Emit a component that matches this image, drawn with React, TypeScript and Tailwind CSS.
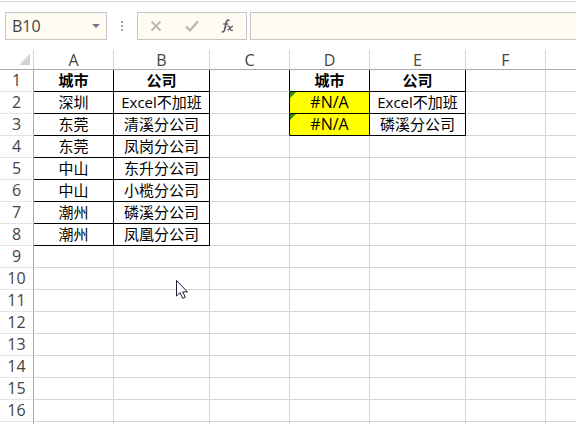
import clsx from "clsx";

const columns = ["A", "B", "C", "D", "E", "F", ""];
const rowNumbers = Array.from({ length: 16 }, (_, i) => i + 1);

const cells: Record<string, string> = {
  A1: "城市",
  B1: "公司",
  A2: "深圳",
  B2: "Excel不加班",
  A3: "东莞",
  B3: "清溪分公司",
  A4: "东莞",
  B4: "凤岗分公司",
  A5: "中山",
  B5: "东升分公司",
  A6: "中山",
  B6: "小榄分公司",
  A7: "潮州",
  B7: "磷溪分公司",
  A8: "潮州",
  B8: "凤凰分公司",
  D1: "城市",
  E1: "公司",
  D2: "#N/A",
  E2: "Excel不加班",
  D3: "#N/A",
  E3: "磷溪分公司",
};

function Cell({ col, row }: { col: string; row: number }) {
  const value = cells[col + row];
  const isError = value === "#N/A";
  // the cell left of the second table draws that table's left edge
  const blackRight = Boolean(value) || (col === "C" && row <= 3);

  return (
    <td
      className={clsx(
        "relative h-[22px] border-r border-b p-0 pb-[2px] text-center text-black last:border-r-0",
        blackRight ? "border-r-black" : "border-r-[#d4d4d4]",
        value ? "border-b-black" : "border-b-[#d4d4d4]",
        row === 1 && "font-bold",
        isError && "bg-[#ffff00] text-[16px]"
      )}
    >
      {isError && (
        <svg className="absolute top-0 left-0 size-[6px]" viewBox="0 0 6 6" aria-hidden="true">
          <path d="M0 0h6L0 6z" fill="#2c8a12" />
        </svg>
      )}
      {value}
    </td>
  );
}

function FormulaBar() {
  return (
    <div className="flex h-[28px] pl-[5px] text-[#444444]">
      <div className="flex w-[102px] shrink-0 border border-[#c6c6c6] bg-[#fffbf3]">
        <input
          aria-label="Name box"
          defaultValue="B10"
          className="w-full min-w-0 bg-transparent pl-[6px] text-[16px] outline-none"
        />
        <button aria-label="Show names" className="flex w-[20px] shrink-0 items-center justify-center">
          <svg width="8" height="4" viewBox="0 0 8 4">
            <path d="M0 0h8L4 4z" fill="#77708a" />
          </svg>
        </button>
      </div>
      <svg className="shrink-0" width="30" height="28" viewBox="0 0 30 28" aria-hidden="true">
        <path d="M14 9h2v2h-2zM14 13h2v2h-2zM14 17h2v2h-2z" fill="#a3a3a3" />
      </svg>
      <div className="mr-[3px] flex w-[110px] shrink-0 items-center justify-between border border-[#c6c6c6] bg-[#fffbf3] px-[8px]">
        <button aria-label="Cancel" className="p-[4px]">
          <svg width="12" height="12" viewBox="0 0 12 12" fill="none" stroke="#b9b6b6" strokeWidth="1.8">
            <path d="M1.500 1.500l9 9M10.500 1.500l-9 9" />
          </svg>
        </button>
        <button aria-label="Enter" className="p-[4px]">
          <svg width="14" height="12" viewBox="0 0 14 12" fill="none" stroke="#b9b6b6" strokeWidth="2.2">
            <path d="M1 6.500l4 3.800L13 1.200" />
          </svg>
        </button>
        <button aria-label="Insert function" className="p-[4px]">
          <svg width="13" height="14" viewBox="0 0 13 14" fill="none" stroke="#5f5c69">
            <path d="M8.400 1.600C7 .5 5.700 1.400 5.300 3.200L3.600 10.600C3.200 12.600 2.300 13.300 .8 12.600" strokeWidth="1.700" />
            <path d="M2.200 5h5" strokeWidth="1.300" />
            <path d="M6.500 7.400c1.400-.6 2 .2 2.400 1.800.5 1.700 1.100 2.600 2.800 1.900M12 7.200c-2.200.2-3.700 3.900-5.700 3.900" strokeWidth="1.300" />
          </svg>
        </button>
      </div>
      <input
        aria-label="Formula bar"
        className="min-w-0 flex-1 border-y border-l border-[#c6c6c6] bg-[#fffbf3] px-2 outline-none"
      />
    </div>
  );
}

function Sheet() {
  return (
    <table className="w-full table-fixed border-separate border-spacing-0 text-[15px] leading-[18px]">
      <colgroup>
        <col className="w-[34px]" />
        <col className="w-[80px]" />
        <col className="w-[96px]" />
        <col className="w-[80px]" />
        <col className="w-[80px]" />
        <col className="w-[96px]" />
        <col className="w-[80px]" />
        <col />
      </colgroup>
      <thead>
        <tr className="text-[16px] leading-[17px] text-[#444444]">
          <th className="h-[20px] border-r border-b border-r-[#d4d4d4] border-b-[#ababab] p-0">
            <svg className="ml-auto mr-[3px]" width="11" height="11" viewBox="0 0 11 11" aria-hidden="true">
              <path d="M11 0v11H0z" fill="#d2d2d2" />
            </svg>
          </th>
          {columns.map((col) => (
            <th
              key={col}
              scope="col"
              className="h-[20px] border-r border-b border-r-[#d4d4d4] border-b-[#ababab] p-0 pt-[2px] font-normal last:border-r-0"
            >
              {col}
            </th>
          ))}
        </tr>
      </thead>
      <tbody>
        {rowNumbers.map((row) => (
          <tr key={row}>
            <th
              scope="row"
              className="h-[22px] border-r border-b border-r-[#ababab] border-b-[#e4e4e4] p-0 pb-[2px] text-[16px] font-normal text-[#444444]"
            >
              {row}
            </th>
            {columns.map((col) => (
              <Cell key={col} col={col} row={row} />
            ))}
          </tr>
        ))}
        <tr>
          <td className="h-[22px] border-r border-[#ababab]" />
          {columns.map((col) => (
            <td key={col} className="border-r border-[#d4d4d4] last:border-r-0" />
          ))}
        </tr>
      </tbody>
    </table>
  );
}

export default function App() {
  return (
    <div className="relative h-screen overflow-hidden bg-white pt-px font-['Open_Sans','Noto_Sans_CJK_SC',sans-serif]">
      <div className="mb-[10px] border-t border-[#d4d4d4]" />
      <FormulaBar />
      <div className="h-[10px]" />
      <Sheet />
      <svg className="absolute top-[280px] left-[176px]" width="13" height="20" viewBox="0 0 13 20" aria-hidden="true">
        <path
          d="M.5 .5v15.500l3.600-3.400 2.600 5.800 2.600-1.200-2.600-5.300h4.800z"
          fill="#ffffff"
          stroke="#1e1e32"
        />
      </svg>
    </div>
  );
}
